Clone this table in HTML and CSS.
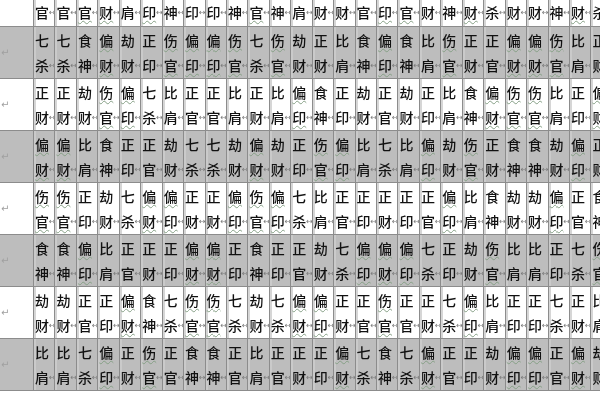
FILE: index.html
```html
<!DOCTYPE html>
<html lang="zh">
<head>
<meta charset="utf-8">
<title>十神表</title>
<link rel="stylesheet" href="styles.css">
</head>
<body>
<div class="sheet">
  <div class="row top">
    <div class="lbl"></div>
    <div class="c"><p class="lo">官</p></div><div class="c"><p class="lo">官</p></div><div class="c w"><p class="lo">官</p></div><div class="c w"><p class="lo">财</p></div><div class="c"><p class="lo">肩</p></div><div class="c w"><p class="lo">印</p></div><div class="c"><p class="lo">神</p></div><div class="c"><p class="lo">印</p></div><div class="c"><p class="lo">印</p></div><div class="c"><p class="lo">神</p></div><div class="c w"><p class="lo">官</p></div><div class="c"><p class="lo">神</p></div><div class="c"><p class="lo">肩</p></div><div class="c"><p class="lo">财</p></div><div class="c"><p class="lo">财</p></div><div class="c"><p class="lo">官</p></div><div class="c w"><p class="lo">印</p></div><div class="c w"><p class="lo">官</p></div><div class="c"><p class="lo">财</p></div><div class="c"><p class="lo">神</p></div><div class="c w"><p class="lo">财</p></div><div class="c"><p class="lo">杀</p></div><div class="c"><p class="lo">财</p></div><div class="c"><p class="lo">财</p></div><div class="c"><p class="lo">神</p></div><div class="c w"><p class="lo">财</p></div><div class="c"><p class="lo">杀</p></div>
  </div>
  <div class="row g">
    <div class="lbl">↵</div>
    <div class="c"><p>七</p><p class="lo">杀</p></div><div class="c"><p>七</p><p class="lo">杀</p></div><div class="c"><p>食</p><p class="lo">神</p></div><div class="c w"><p>偏</p><p class="lo">财</p></div><div class="c"><p>劫</p><p class="lo">财</p></div><div class="c"><p>正</p><p class="lo">印</p></div><div class="c w"><p>伤</p><p class="lo">官</p></div><div class="c w"><p>偏</p><p class="lo">印</p></div><div class="c w"><p>偏</p><p class="lo">印</p></div><div class="c w"><p>伤</p><p class="lo">官</p></div><div class="c"><p>七</p><p class="lo">杀</p></div><div class="c w"><p>伤</p><p class="lo">官</p></div><div class="c"><p>劫</p><p class="lo">财</p></div><div class="c"><p>正</p><p class="lo">财</p></div><div class="c"><p>比</p><p class="lo">肩</p></div><div class="c"><p>食</p><p class="lo">神</p></div><div class="c w"><p>偏</p><p class="lo">印</p></div><div class="c"><p>食</p><p class="lo">神</p></div><div class="c"><p>比</p><p class="lo">肩</p></div><div class="c w"><p>伤</p><p class="lo">官</p></div><div class="c"><p>正</p><p class="lo">财</p></div><div class="c"><p>正</p><p class="lo">官</p></div><div class="c w"><p>偏</p><p class="lo">财</p></div><div class="c w"><p>偏</p><p class="lo">财</p></div><div class="c w"><p>伤</p><p class="lo">官</p></div><div class="c"><p>比</p><p class="lo">肩</p></div><div class="c"><p>正</p><p class="lo">财</p></div>
  </div>
  <div class="row">
    <div class="lbl">↵</div>
    <div class="c"><p>正</p><p class="lo">财</p></div><div class="c"><p>正</p><p class="lo">财</p></div><div class="c"><p>劫</p><p class="lo">财</p></div><div class="c w"><p>伤</p><p class="lo">官</p></div><div class="c w"><p>偏</p><p class="lo">印</p></div><div class="c"><p>七</p><p class="lo">杀</p></div><div class="c"><p>比</p><p class="lo">肩</p></div><div class="c"><p>正</p><p class="lo">官</p></div><div class="c"><p>正</p><p class="lo">官</p></div><div class="c"><p>比</p><p class="lo">肩</p></div><div class="c"><p>正</p><p class="lo">财</p></div><div class="c"><p>比</p><p class="lo">肩</p></div><div class="c w"><p>偏</p><p class="lo">印</p></div><div class="c"><p>食</p><p class="lo">神</p></div><div class="c"><p>正</p><p class="lo">印</p></div><div class="c"><p>劫</p><p class="lo">财</p></div><div class="c"><p>正</p><p class="lo">官</p></div><div class="c"><p>劫</p><p class="lo">财</p></div><div class="c"><p>正</p><p class="lo">印</p></div><div class="c"><p>比</p><p class="lo">肩</p></div><div class="c"><p>食</p><p class="lo">神</p></div><div class="c w"><p>偏</p><p class="lo">财</p></div><div class="c w"><p>伤</p><p class="lo">官</p></div><div class="c w"><p>伤</p><p class="lo">官</p></div><div class="c"><p>比</p><p class="lo">肩</p></div><div class="c"><p>正</p><p class="lo">印</p></div><div class="c w"><p>偏</p><p class="lo">财</p></div>
  </div>
  <div class="row g">
    <div class="lbl">↵</div>
    <div class="c w"><p>偏</p><p class="lo">财</p></div><div class="c w"><p>偏</p><p class="lo">财</p></div><div class="c"><p>比</p><p class="lo">肩</p></div><div class="c"><p>食</p><p class="lo">神</p></div><div class="c"><p>正</p><p class="lo">印</p></div><div class="c"><p>正</p><p class="lo">官</p></div><div class="c"><p>劫</p><p class="lo">财</p></div><div class="c"><p>七</p><p class="lo">杀</p></div><div class="c"><p>七</p><p class="lo">杀</p></div><div class="c"><p>劫</p><p class="lo">财</p></div><div class="c w"><p>偏</p><p class="lo">财</p></div><div class="c"><p>劫</p><p class="lo">财</p></div><div class="c"><p>正</p><p class="lo">印</p></div><div class="c w"><p>伤</p><p class="lo">官</p></div><div class="c w"><p>偏</p><p class="lo">印</p></div><div class="c"><p>比</p><p class="lo">肩</p></div><div class="c"><p>七</p><p class="lo">杀</p></div><div class="c"><p>比</p><p class="lo">肩</p></div><div class="c w"><p>偏</p><p class="lo">印</p></div><div class="c"><p>劫</p><p class="lo">财</p></div><div class="c w"><p>伤</p><p class="lo">官</p></div><div class="c"><p>正</p><p class="lo">财</p></div><div class="c"><p>食</p><p class="lo">神</p></div><div class="c"><p>食</p><p class="lo">神</p></div><div class="c"><p>劫</p><p class="lo">财</p></div><div class="c w"><p>偏</p><p class="lo">印</p></div><div class="c"><p>正</p><p class="lo">财</p></div>
  </div>
  <div class="row">
    <div class="lbl">↵</div>
    <div class="c w"><p>伤</p><p class="lo">官</p></div><div class="c w"><p>伤</p><p class="lo">官</p></div><div class="c"><p>正</p><p class="lo">印</p></div><div class="c"><p>劫</p><p class="lo">财</p></div><div class="c"><p>七</p><p class="lo">杀</p></div><div class="c w"><p>偏</p><p class="lo">财</p></div><div class="c w"><p>偏</p><p class="lo">印</p></div><div class="c"><p>正</p><p class="lo">财</p></div><div class="c"><p>正</p><p class="lo">财</p></div><div class="c w"><p>偏</p><p class="lo">印</p></div><div class="c w"><p>伤</p><p class="lo">官</p></div><div class="c w"><p>偏</p><p class="lo">印</p></div><div class="c"><p>七</p><p class="lo">杀</p></div><div class="c"><p>比</p><p class="lo">肩</p></div><div class="c"><p>正</p><p class="lo">官</p></div><div class="c"><p>正</p><p class="lo">印</p></div><div class="c"><p>正</p><p class="lo">财</p></div><div class="c"><p>正</p><p class="lo">印</p></div><div class="c"><p>正</p><p class="lo">官</p></div><div class="c w"><p>偏</p><p class="lo">印</p></div><div class="c"><p>比</p><p class="lo">肩</p></div><div class="c"><p>食</p><p class="lo">神</p></div><div class="c"><p>劫</p><p class="lo">财</p></div><div class="c"><p>劫</p><p class="lo">财</p></div><div class="c w"><p>偏</p><p class="lo">印</p></div><div class="c"><p>正</p><p class="lo">官</p></div><div class="c"><p>食</p><p class="lo">神</p></div>
  </div>
  <div class="row g">
    <div class="lbl">↵</div>
    <div class="c"><p>食</p><p class="lo">神</p></div><div class="c"><p>食</p><p class="lo">神</p></div><div class="c w"><p>偏</p><p class="lo">印</p></div><div class="c"><p>比</p><p class="lo">肩</p></div><div class="c"><p>正</p><p class="lo">官</p></div><div class="c"><p>正</p><p class="lo">财</p></div><div class="c"><p>正</p><p class="lo">印</p></div><div class="c w"><p>偏</p><p class="lo">财</p></div><div class="c w"><p>偏</p><p class="lo">财</p></div><div class="c"><p>正</p><p class="lo">印</p></div><div class="c"><p>食</p><p class="lo">神</p></div><div class="c"><p>正</p><p class="lo">印</p></div><div class="c"><p>正</p><p class="lo">官</p></div><div class="c"><p>劫</p><p class="lo">财</p></div><div class="c"><p>七</p><p class="lo">杀</p></div><div class="c w"><p>偏</p><p class="lo">印</p></div><div class="c w"><p>偏</p><p class="lo">财</p></div><div class="c w"><p>偏</p><p class="lo">印</p></div><div class="c"><p>七</p><p class="lo">杀</p></div><div class="c"><p>正</p><p class="lo">印</p></div><div class="c"><p>劫</p><p class="lo">财</p></div><div class="c w"><p>伤</p><p class="lo">官</p></div><div class="c"><p>比</p><p class="lo">肩</p></div><div class="c"><p>比</p><p class="lo">肩</p></div><div class="c"><p>正</p><p class="lo">印</p></div><div class="c"><p>七</p><p class="lo">杀</p></div><div class="c w"><p>伤</p><p class="lo">官</p></div>
  </div>
  <div class="row">
    <div class="lbl">↵</div>
    <div class="c"><p>劫</p><p class="lo">财</p></div><div class="c"><p>劫</p><p class="lo">财</p></div><div class="c"><p>正</p><p class="lo">官</p></div><div class="c"><p>正</p><p class="lo">印</p></div><div class="c w"><p>偏</p><p class="lo">财</p></div><div class="c"><p>食</p><p class="lo">神</p></div><div class="c"><p>七</p><p class="lo">杀</p></div><div class="c w"><p>伤</p><p class="lo">官</p></div><div class="c w"><p>伤</p><p class="lo">官</p></div><div class="c"><p>七</p><p class="lo">杀</p></div><div class="c"><p>劫</p><p class="lo">财</p></div><div class="c"><p>七</p><p class="lo">杀</p></div><div class="c w"><p>偏</p><p class="lo">财</p></div><div class="c w"><p>偏</p><p class="lo">印</p></div><div class="c"><p>正</p><p class="lo">财</p></div><div class="c"><p>正</p><p class="lo">官</p></div><div class="c w"><p>伤</p><p class="lo">官</p></div><div class="c"><p>正</p><p class="lo">官</p></div><div class="c"><p>正</p><p class="lo">财</p></div><div class="c"><p>七</p><p class="lo">杀</p></div><div class="c w"><p>偏</p><p class="lo">印</p></div><div class="c"><p>比</p><p class="lo">肩</p></div><div class="c"><p>正</p><p class="lo">印</p></div><div class="c"><p>正</p><p class="lo">印</p></div><div class="c"><p>七</p><p class="lo">杀</p></div><div class="c"><p>正</p><p class="lo">财</p></div><div class="c"><p>比</p><p class="lo">肩</p></div>
  </div>
  <div class="row g">
    <div class="lbl">↵</div>
    <div class="c"><p>比</p><p class="lo">肩</p></div><div class="c"><p>比</p><p class="lo">肩</p></div><div class="c"><p>七</p><p class="lo">杀</p></div><div class="c w"><p>偏</p><p class="lo">印</p></div><div class="c"><p>正</p><p class="lo">财</p></div><div class="c w"><p>伤</p><p class="lo">官</p></div><div class="c"><p>正</p><p class="lo">官</p></div><div class="c"><p>食</p><p class="lo">神</p></div><div class="c"><p>食</p><p class="lo">神</p></div><div class="c"><p>正</p><p class="lo">官</p></div><div class="c"><p>比</p><p class="lo">肩</p></div><div class="c"><p>正</p><p class="lo">官</p></div><div class="c"><p>正</p><p class="lo">财</p></div><div class="c"><p>正</p><p class="lo">印</p></div><div class="c w"><p>偏</p><p class="lo">财</p></div><div class="c"><p>七</p><p class="lo">杀</p></div><div class="c"><p>食</p><p class="lo">神</p></div><div class="c"><p>七</p><p class="lo">杀</p></div><div class="c w"><p>偏</p><p class="lo">财</p></div><div class="c"><p>正</p><p class="lo">官</p></div><div class="c"><p>正</p><p class="lo">印</p></div><div class="c"><p>劫</p><p class="lo">财</p></div><div class="c w"><p>偏</p><p class="lo">印</p></div><div class="c w"><p>偏</p><p class="lo">印</p></div><div class="c"><p>正</p><p class="lo">官</p></div><div class="c w"><p>偏</p><p class="lo">财</p></div><div class="c"><p>劫</p><p class="lo">财</p></div>
  </div>
</div>
</body>
</html>
```

FILE: styles.css
```css
html, body {
  margin: 0;
  padding: 0;
  background: #ffffff;
  overflow: hidden;
}

body {
  width: 600px;
  height: 400px;
  font-family: "Noto Sans CJK SC", "Noto Sans", sans-serif;
  color: #111111;
}

.sheet {
  will-change: transform;
  -webkit-font-smoothing: antialiased;
}

.row {
  display: grid;
  grid-template-columns: 33px repeat(27, 21.45px);
  height: 52px;
  box-sizing: border-box;
  border-bottom: 1px solid #8c8c8c;
  background: #ffffff;
}

.row.top {
  height: 27px;
}

.row.g {
  background: #bdbdbd;
}

.lbl {
  display: flex;
  align-items: center;
  padding-left: 1px;
  font-family: "DejaVu Sans", sans-serif;
  font-size: 10px;
  color: #a0a0a0;
}

.c {
  border-left: 1px solid #8c8c8c;
  box-shadow: inset 2px 0 0 #d6d6d6;
  padding: 1px 0 0 1px;
  font-size: 14px;
  font-weight: 500;
  line-height: 25px;
  overflow: hidden;
}

.row.top .c {
  padding-top: 0;
}

.row.g .c {
  box-shadow: inset 2px 0 0 #cacaca;
}

.c p {
  margin: 0;
  height: 25px;
  white-space: nowrap;
}

.c .lo::after {
  content: "↔";
  display: inline-block;
  font-family: "DejaVu Sans", sans-serif;
  font-size: 8px;
  font-weight: 400;
  line-height: 25px;
  color: #7a7a7a;
  vertical-align: top;
}

.c.w p {
  text-decoration: underline wavy #86a086;
  text-decoration-thickness: 1px;
  text-underline-offset: 2px;
}
```
